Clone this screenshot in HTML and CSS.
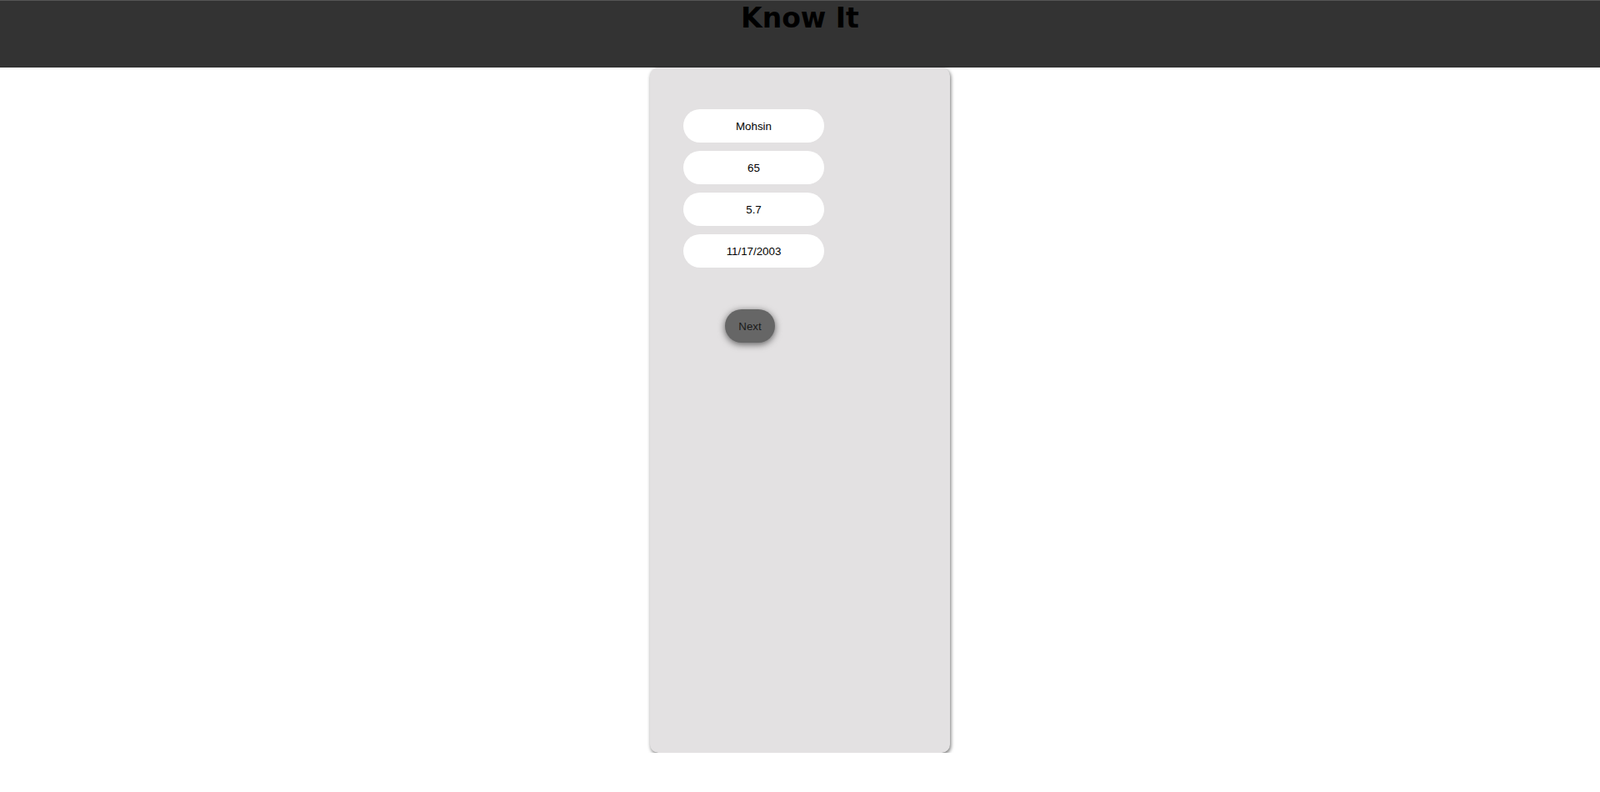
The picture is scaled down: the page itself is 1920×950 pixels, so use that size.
FILE: index.html
```html
<!DOCTYPE html>
<html>
<head>
<meta charset="utf-8">
<link rel="stylesheet" href="styles.css">
</head>
<body>
<header class="topbar">
  <h1 class="title">Know It</h1>
</header>
<main class="page">
  <section class="card">
    <div class="fields">
      <input class="field" type="text" value="Mohsin">
      <input class="field" type="text" value="65">
      <input class="field" type="text" value="5.7">
      <input class="field" type="text" value="11/17/2003">
    </div>
    <button class="next">Next</button>
  </section>
</main>
</body>
</html>
```
FILE: styles.css
```css
html, body {
  margin: 0;
  padding: 0;
  background: #ffffff;
}
.topbar {
  height: 80px;
  background: #333333;
  border-top: 1px solid #555555;
  text-align: center;
}
.title {
  margin: 1px 0 0;
  font-family: "DejaVu Sans", sans-serif;
  font-weight: bold;
  font-size: 33px;
  color: #000;
}
.page {
  display: flex;
  justify-content: center;
}
.card {
  box-sizing: border-box;
  width: 360px;
  height: 822px;
  background: #e3e1e2;
  border-radius: 10px;
  box-shadow: 1px 2px 4px rgba(0,0,0,0.55);
  padding: 50px 40px;
}
.fields {
  display: flex;
  flex-direction: column;
  gap: 10px;
}
.field {
  box-sizing: border-box;
  width: 169px;
  height: 40px;
  border: none;
  border-radius: 20px;
  background: #fff;
  text-align: center;
  font-family: "Liberation Sans", Arial, sans-serif;
  font-size: 13.33px;
  color: #000;
  padding: 0;
  outline: none;
}
.next {
  display: block;
  box-sizing: border-box;
  margin: 50px 0 0 50px;
  width: 60px;
  height: 40px;
  border: none;
  border-radius: 20px;
  background: #666666;
  color: #1a1a1a;
  font-family: "Liberation Sans", Arial, sans-serif;
  font-size: 13.33px;
  box-shadow: 0 2px 8px rgba(0,0,0,0.6);
  padding: 0;
}
```
